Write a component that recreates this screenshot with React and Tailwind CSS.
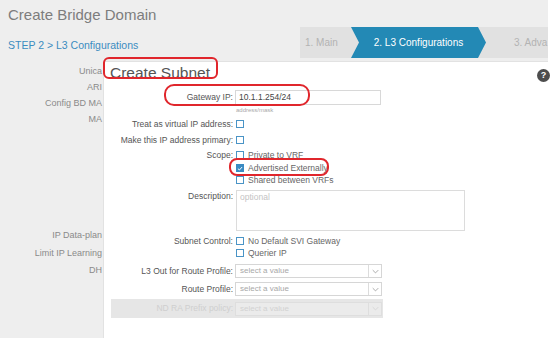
import React from 'react';

const Check = ({ checked }) =>
  checked ? (
    <span className="w-[8px] h-[8px] shrink-0 bg-[#3a8bc2] border border-[#3a8bc2] flex items-center justify-center">
      <svg viewBox="0 0 10 10" className="w-[7px] h-[7px]">
        <path d="M1.5 5.2 L4 7.5 L8.5 2.5" fill="none" stroke="#fff" strokeWidth="1.6" />
      </svg>
    </span>
  ) : (
    <span className="w-[8px] h-[8px] shrink-0 bg-white border border-[#4a94c6]" />
  );

const Option = ({ checked, text }) => (
  <div className="flex items-center gap-[4px] ml-[1px]">
    <Check checked={checked} />
    {text && <span className="text-[8.5px] text-[#666] whitespace-nowrap">{text}</span>}
  </div>
);

const Row = ({ label, className, children }) => (
  <div className={`flex items-center ${className}`}>
    <div className="w-[129px] shrink-0 text-right text-[8.5px] text-[#555] whitespace-nowrap">{label}</div>
    <div className="ml-[2px] flex items-center">{children}</div>
  </div>
);

const Select = ({ disabled }) => (
  <div
    className={`w-[147px] h-[14px] border flex items-center ${
      disabled ? 'border-[#dedede] bg-[#ebebeb]' : 'border-[#d6d6d6] bg-white'
    }`}
  >
    <span className={`flex-1 pl-[4px] text-[8px] ${disabled ? 'text-[#d2d2d2]' : 'text-[#a8a8a8]'}`}>select a value</span>
    <span className={`w-[13px] h-full border-l flex items-center justify-center ${disabled ? 'border-[#dedede]' : 'border-[#dcdcdc]'}`}>
      <svg viewBox="0 0 10 6" className="w-[7px] h-[5px]">
        <path d="M1 1 L5 5 L9 1" fill="none" stroke={disabled ? '#d0d0d0' : '#8a8a8a'} strokeWidth="1" />
      </svg>
    </span>
  </div>
);

// what shows of the page's labels beside the dialog
const leftLabels = [
  { text: 'Unica', cls: 'h-[16px]' },
  { text: 'ARI', cls: 'h-[16px]' },
  { text: 'Config BD MA', cls: 'h-[16px]' },
  { text: 'MA', cls: 'h-[16px]' },
  { text: 'IP Data-plan', cls: 'h-[16px] mt-[100px]' },
  { text: 'Limit IP Learning', cls: 'h-[16px] mt-[2px]' },
  { text: 'DH', cls: 'h-[16px] mt-[1px]' },
];

export default function App() {
  return (
    <div className="w-[551px] h-[338px] bg-white overflow-hidden font-['Liberation_Sans',Arial,sans-serif]">
      <div className="relative w-[548px] h-[338px] bg-[#eeeeee]">
        {/* header */}
        <div className="h-[61px] flex">
          <div className="pl-[8px] pt-[6px] flex flex-col">
            <div className="text-[15px] leading-[18px] text-[#7d7d7d] whitespace-nowrap">Create Bridge Domain</div>
            <div className="mt-[15px] text-[10.5px] leading-[12px] text-[#3b8cc0] whitespace-nowrap">STEP 2 &gt; L3 Configurations</div>
          </div>
          <div className="ml-auto mt-[27px] h-[31px] w-[248px] bg-[#e1e1e1] flex items-center">
            <div className="w-[51px] shrink-0 pl-[5px] text-[10px] text-[#b3b3b3] whitespace-nowrap">1. Main</div>
            <div className="w-[135px] h-full shrink-0 bg-[#2389b5] flex items-center justify-center text-[10px] text-white whitespace-nowrap [clip-path:polygon(0_0,127px_0,135px_50%,127px_100%,0_100%,8px_50%)]">
              2. L3 Configurations
            </div>
            <div className="pl-[28px] text-[10px] text-[#b3b3b3] whitespace-nowrap">3. Adva</div>
          </div>
        </div>

        {/* page behind dialog */}
        <div className="w-[102px] pt-[3px] flex flex-col">
          {leftLabels.map((l) => (
            <div key={l.text} className={`${l.cls} flex items-center justify-end text-[9px] text-[#8a8a8a] whitespace-nowrap`}>
              {l.text}
            </div>
          ))}
        </div>

        {/* dialog */}
        <div className="absolute left-[103px] top-[61px] right-0 bottom-0 bg-white border-l border-t border-[#e2e2e2] flex flex-col">
          <div className="h-[22px] pl-[6px] text-[15.5px] leading-[22px] text-[#555]">Create Subnet</div>
          <div className="absolute right-[-2px] top-[7px] w-[13px] h-[13px] rounded-full bg-[#4d4d4d] text-white text-[9px] font-bold flex items-center justify-center">
            ?
          </div>

          <Row label="Gateway IP:" className="h-[15px] mt-[6px]">
            <div className="w-[146px] h-[15px] border border-[#d8d8d8] flex items-center pl-[3px] text-[8.5px] text-[#444]">
              10.1.1.254/24
            </div>
          </Row>
          <div className="h-[10px] pl-[132px] text-[6px] leading-[10px] text-[#aaa]">address/mask</div>

          <Row label="Treat as virtual IP address:" className="h-[14px] mt-[2px]">
            <Option />
          </Row>
          <Row label="Make this IP address primary:" className="h-[14px] mt-[2px]">
            <Option />
          </Row>
          <Row label="Scope:" className="h-[14px] mt-[1px]">
            <Option text="Private to VRF" />
          </Row>
          <Row label="" className="h-[12px]">
            <Option checked text="Advertised Externally" />
          </Row>
          <Row label="" className="h-[12px]">
            <Option text="Shared between VRFs" />
          </Row>

          <div className="flex items-start mt-[4px]">
            <div className="w-[129px] shrink-0 text-right text-[8.5px] leading-[12px] text-[#555]">Description:</div>
            <div className="ml-[3px] w-[229px] h-[41px] border border-[#dcdcdc] pl-[3px] pt-[1px] text-[8.5px] leading-[10px] text-[#c4c4c4]">
              optional
            </div>
          </div>

          <Row label="Subnet Control:" className="h-[12px] mt-[4px]">
            <Option text="No Default SVI Gateway" />
          </Row>
          <Row label="" className="h-[12px]">
            <Option text="Querier IP" />
          </Row>

          <Row label="L3 Out for Route Profile:" className="h-[14px] mt-[5px]">
            <Select />
          </Row>
          <Row label="Route Profile:" className="h-[14px] mt-[4px]">
            <Select />
          </Row>

          <div className="mt-[3px] ml-[7px] w-[272px] h-[19px] bg-[#e6e6e6] flex items-center">
            <div className="w-[122px] shrink-0 text-right text-[8.5px] text-[#cfcfcf] whitespace-nowrap">ND RA Prefix policy:</div>
            <div className="ml-[2px]">
              <Select disabled />
            </div>
          </div>
        </div>

        {/* red annotation marks */}
        <div className="absolute left-[103px] top-[57px] w-[115px] h-[22px] rounded-[6px] border-2 border-[#e0262c]" />
        <div className="absolute left-[164px] top-[84px] w-[146px] h-[22px] rounded-[10px] border-2 border-[#e0262c]" />
        <div className="absolute left-[229px] top-[158px] w-[100px] h-[18px] rounded-[8px] border-2 border-[#e0262c]" />
      </div>
    </div>
  );
}
